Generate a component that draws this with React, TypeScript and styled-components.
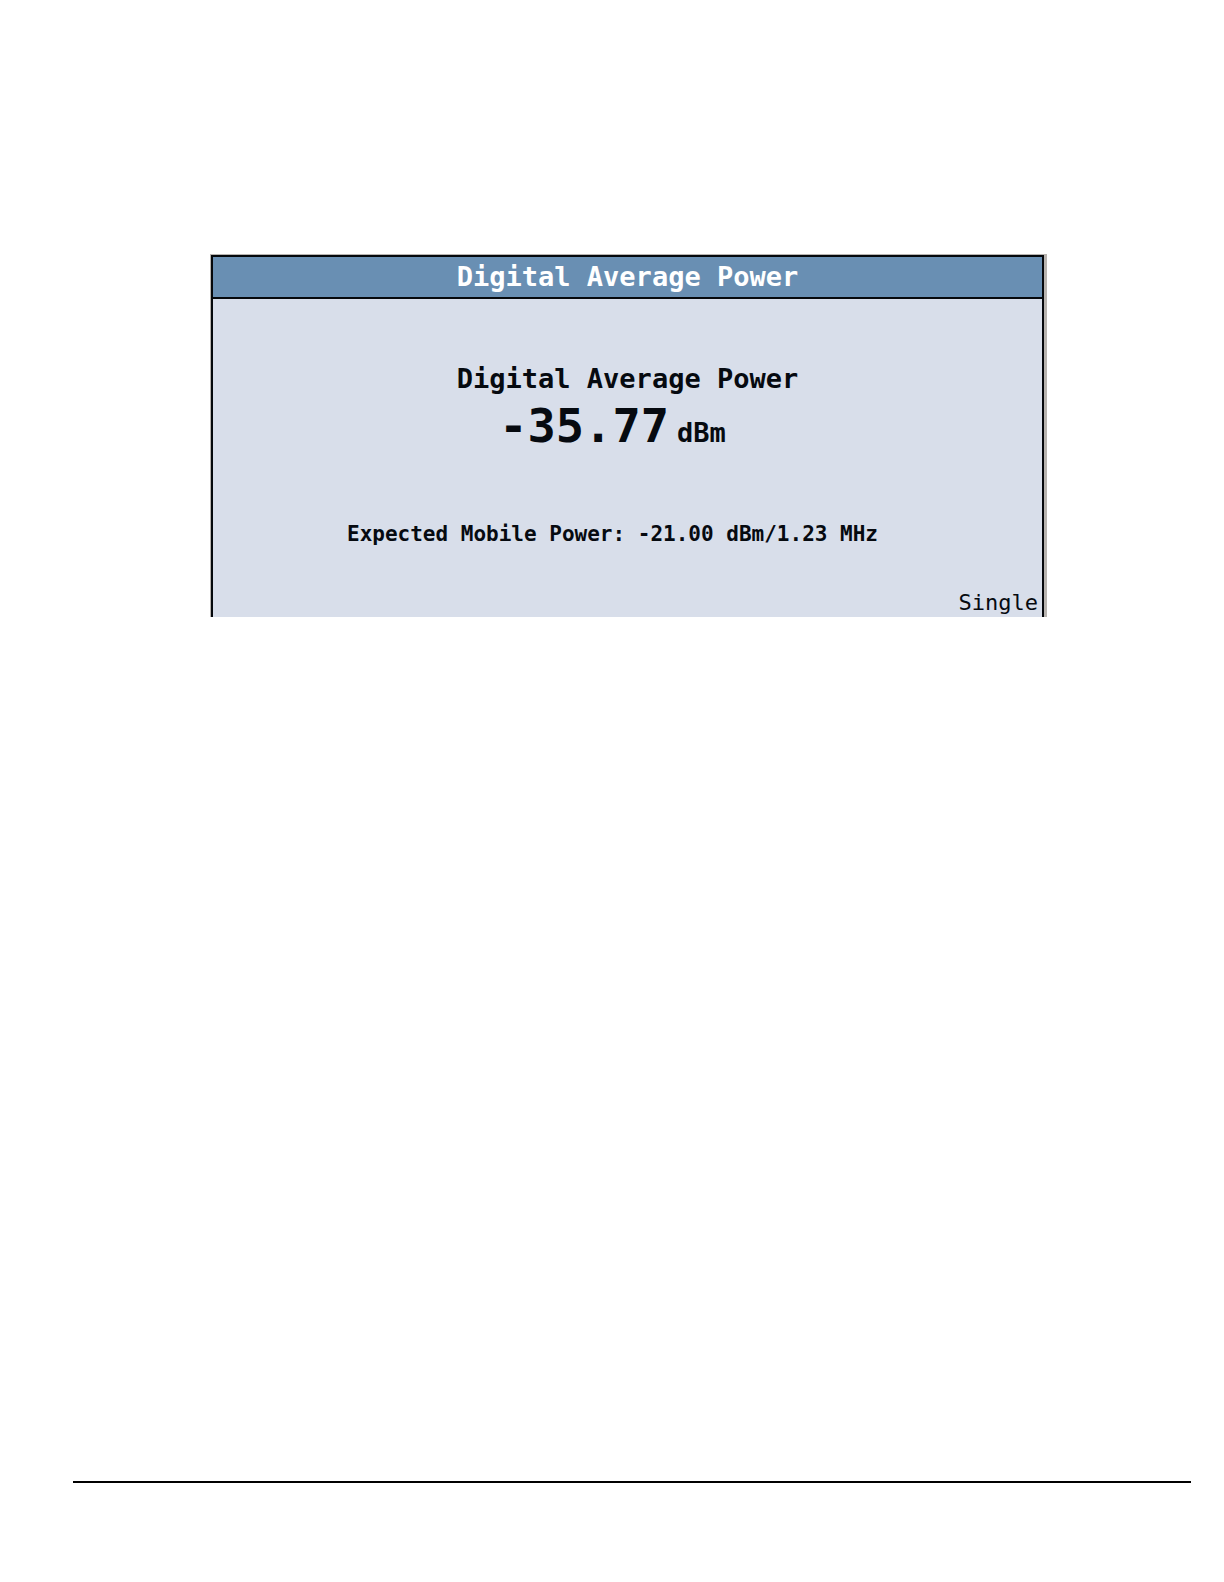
import React from "react";
import styled, { createGlobalStyle } from "styled-components";

const GlobalStyle = createGlobalStyle`
  * { box-sizing: border-box; }
  body {
    margin: 0;
    background: #ffffff;
    color: #060a10;
    font-family: "DejaVu Sans Mono", monospace;
  }
`;

const Page = styled.div`
  display: flex;
  flex-direction: column;
  justify-content: space-between;
  min-height: 100vh;
  padding: 254px 33px 99px 73px;
`;

const Screen = styled.main`
  display: flex;
  flex-direction: column;
  margin: 0 144px 0 137px;
  border: solid #b8b4b0;
  border-width: 1px 3px 0 1px;
`;

const Frame = styled.div`
  border: solid #05080c;
  border-width: 2px 2px 0;
  background: #d8deea;
`;

const Heading = styled.h1`
  margin: 0;
  font-size: 27px;
  line-height: 40px;
  font-weight: 700;
  text-align: center;
`;

const TitleBar = styled.header`
  border-bottom: 2px solid #05080c;
  background: #698fb3;
  color: #ffffff;
`;

const Measurement = styled.section`
  display: flex;
  flex-direction: column;
  padding-top: 60px;
`;

const Reading = styled.p`
  display: flex;
  justify-content: center;
  align-items: baseline;
  gap: 8px;
  margin: 0;
  padding-right: 30px;
  font-weight: 700;
  line-height: 54px;
`;

const Value = styled.span`
  font-size: 47px;
`;

const Unit = styled.span`
  font-size: 27px;
`;

const Expected = styled.p`
  margin: 54px 0 0;
  padding-right: 30px;
  font-size: 21px;
  line-height: 40px;
  font-weight: 700;
  text-align: center;
`;

const Status = styled.footer`
  padding: 36px 4px 1px 0;
  font-size: 22px;
  line-height: 26px;
  text-align: right;
`;

const PageRule = styled.hr`
  width: 100%;
  height: 2px;
  margin: 0;
  border: 0;
  background: #000000;
`;

export default function App() {
  return (
    <>
      <GlobalStyle />
      <Page>
        <Screen>
          <Frame>
            <TitleBar>
              <Heading>Digital Average Power</Heading>
            </TitleBar>
            <Measurement>
              <Heading as="h2">Digital Average Power</Heading>
              <Reading>
                <Value>-35.77</Value>
                <Unit>dBm</Unit>
              </Reading>
              <Expected>Expected Mobile Power: -21.00 dBm/1.23 MHz</Expected>
            </Measurement>
            <Status>Single</Status>
          </Frame>
        </Screen>
        <PageRule />
      </Page>
    </>
  );
}
